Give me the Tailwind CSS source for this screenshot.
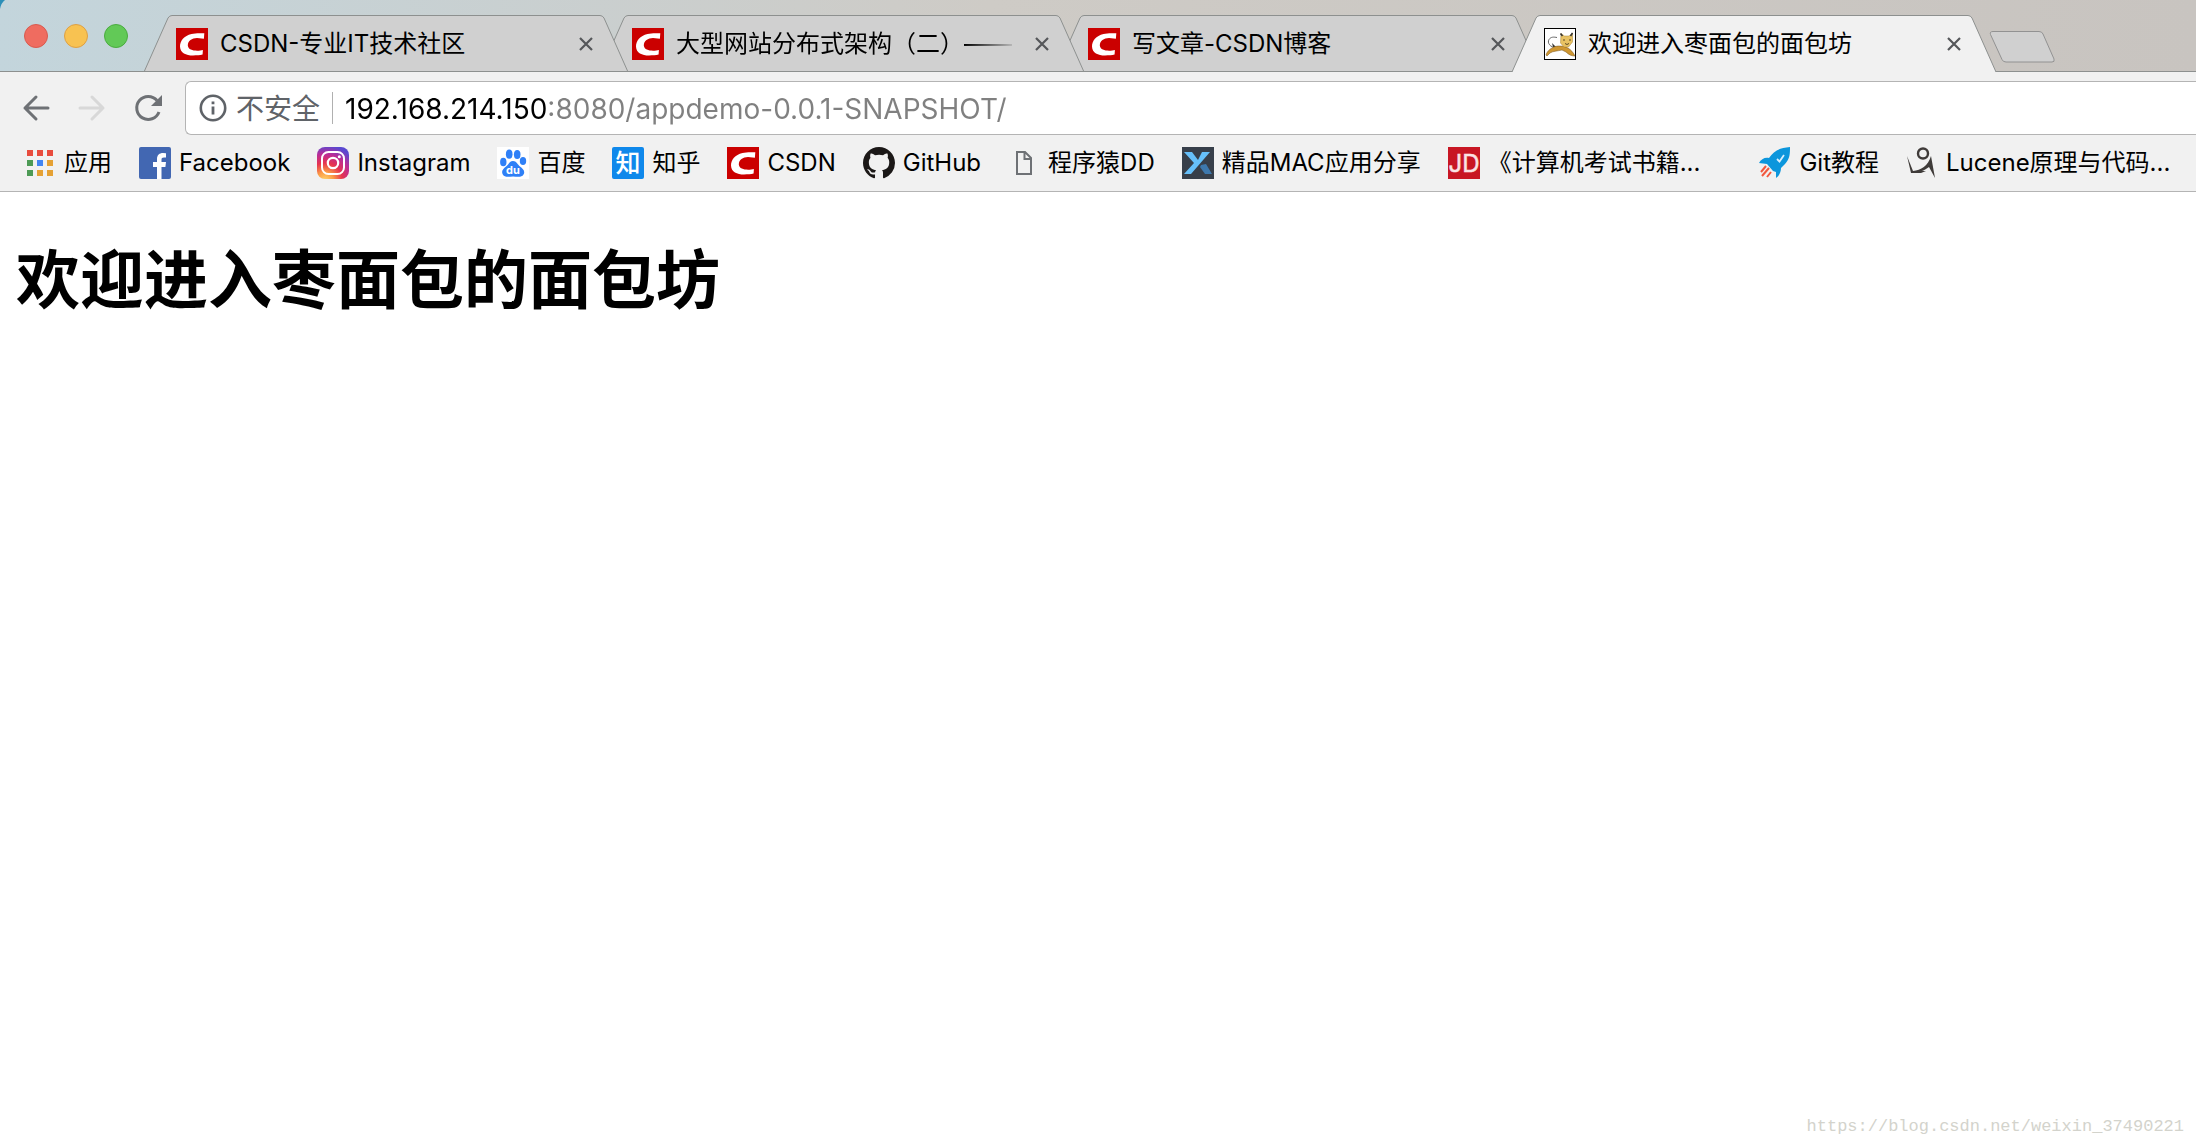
<!DOCTYPE html>
<html lang="zh-CN">
<head>
    <meta charset="UTF-8">
    <meta name="viewport" content="width=device-width, initial-scale=1.0">
    <title>欢迎进入枣面包的面包坊</title>
    <script src="https://cdn.jsdelivr.net/npm/@tailwindcss/browser@4"></script>
</head>
<body class="min-h-screen flex flex-col bg-white text-black font-[Inter,'Noto_Sans_CJK_SC',sans-serif] overflow-x-hidden">
    <!-- Shared shapes -->
    <svg class="hidden">
        <symbol id="csdn" viewBox="0 0 32 32">
            <rect width="32" height="32" fill="#cb0000"/>
            <path d="M28.300 5.300C24 5 19 5 15.500 6C8 7.800 4 13 4 18.500C4.200 25 10 27.500 17 27.500C21 27.500 24 27.300 26.600 26.600L26.900 22C22 23.200 12.300 23.400 11.800 17.500C11.800 12.500 16 10.200 21 10L27.900 10.700Z" fill="#fff"/>
        </symbol>
        <symbol id="tab-left" viewBox="0 0 30 57">
            <path d="M0 57L24 3Q25.500 .5 28 .5H30V57Z" fill="currentColor"/>
            <path d="M0 57L24 3Q25.500 .5 28 .5H30" fill="none" stroke="#8d908f"/>
        </symbol>
        <symbol id="tab-right" viewBox="0 0 30 57">
            <path d="M30 57L6 3Q4.500 .5 2 .5H0V57Z" fill="currentColor"/>
            <path d="M30 57L6 3Q4.500 .5 2 .5H0" fill="none" stroke="#8d908f"/>
        </symbol>
        <symbol id="close" viewBox="0 0 14 14">
            <path d="M1 1L13 13M13 1L1 13" stroke="#55575a" stroke-width="2.200" fill="none"/>
        </symbol>
    </svg>

    <!-- Tab strip -->
    <header class="relative flex h-[72px] bg-linear-to-r from-[#c3d5dc] via-[#cecbc6] via-45% to-[#c8c4c0]">
        <svg class="absolute left-0 top-0 size-3" viewBox="0 0 12 12"><path d="M0 0H5Q1 3 0 9Z" fill="#2c8fb8"/></svg>
        <div class="flex gap-4 pl-6 pr-4 pt-6 shrink-0">
            <button aria-label="关闭" class="size-6 rounded-full bg-[#ef6c60] border border-[#d85a4f]"></button>
            <button aria-label="最小化" class="size-6 rounded-full bg-[#f8c251] border border-[#dda045]"></button>
            <button aria-label="缩放" class="size-6 rounded-full bg-[#62c957] border border-[#4aac3f]"></button>
        </div>

        <nav class="flex grow min-w-0 pt-[15px] text-2xl" aria-label="标签页">
            <div class="relative z-30 flex basis-[484px] min-w-0 text-[#d0d0d0]">
                <svg class="w-[30px] h-[57px] shrink-0"><use href="#tab-left"/></svg>
                <div class="flex grow min-w-0 items-center bg-[#d0d0d0] border-t border-[#8d908f] pl-0.5 pr-[5px]">
                    <svg class="size-8 shrink-0"><use href="#csdn"/></svg>
                    <a href="#" class="ml-3 grow basis-0 overflow-hidden whitespace-nowrap text-black">CSDN-专业IT技术社区</a>
                    <button aria-label="关闭标签页" class="ml-4"><svg class="size-3.5"><use href="#close"/></svg></button>
                </div>
                <svg class="w-[30px] h-[57px] shrink-0"><use href="#tab-right"/></svg>
            </div>
            <div class="relative z-20 -ml-7 flex basis-[484px] min-w-0 text-[#d0d0d0]">
                <svg class="w-[30px] h-[57px] shrink-0"><use href="#tab-left"/></svg>
                <div class="flex grow min-w-0 items-center bg-[#d0d0d0] border-t border-[#8d908f] pl-0.5 pr-[5px]">
                    <svg class="size-8 shrink-0"><use href="#csdn"/></svg>
                    <a href="#" class="ml-3 grow basis-0 overflow-hidden whitespace-nowrap text-black [mask-image:linear-gradient(90deg,#000_84%,transparent)]">大型网站分布式架构（二）——</a>
                    <button aria-label="关闭标签页" class="ml-4"><svg class="size-3.5"><use href="#close"/></svg></button>
                </div>
                <svg class="w-[30px] h-[57px] shrink-0"><use href="#tab-right"/></svg>
            </div>
            <div class="relative z-10 -ml-7 flex basis-[484px] min-w-0 text-[#d0d0d0]">
                <svg class="w-[30px] h-[57px] shrink-0"><use href="#tab-left"/></svg>
                <div class="flex grow min-w-0 items-center bg-[#d0d0d0] border-t border-[#8d908f] pl-0.5 pr-[5px]">
                    <svg class="size-8 shrink-0"><use href="#csdn"/></svg>
                    <a href="#" class="ml-3 grow basis-0 overflow-hidden whitespace-nowrap text-black">写文章-CSDN博客</a>
                    <button aria-label="关闭标签页" class="ml-4"><svg class="size-3.5"><use href="#close"/></svg></button>
                </div>
                <svg class="w-[30px] h-[57px] shrink-0"><use href="#tab-right"/></svg>
            </div>
            <!-- Active tab -->
            <div class="relative z-40 -ml-7 flex basis-[484px] min-w-0 text-[#f1f1f1]">
                <svg class="w-[30px] h-[57px] shrink-0"><use href="#tab-left"/></svg>
                <div class="flex grow min-w-0 items-center bg-[#f1f1f1] border-t border-[#8d908f] pl-0.5 pr-[5px]">
                    <svg class="size-8 shrink-0" viewBox="0 0 32 32">
                        <rect x=".5" y=".5" width="31" height="31" fill="#fff" stroke="#000"/>
                        <path d="M12 20C6 19 3 15 5 11.500C7 8.500 10 9 13 9.500" fill="none" stroke="#666" stroke-width="1"/>
                        <path d="M8 15L12 19L9 19Z" fill="#333"/>
                        <path d="M2 27C3 23 7 20 11 18.500C15 17.500 20 18 24 20C27 22 29 24 31 28C28 28 25 27 22 24L18 22C14 23 9 23 6 25L3 28Z" fill="#cf9732" stroke="#75531c" stroke-width=".5"/>
                        <path d="M17 5.500L20.500 8H25L28.500 5L28.500 14L24.500 19H20L16.500 15Z" fill="#e8c263" stroke="#a8853a" stroke-width=".5"/>
                        <path d="M16.500 5.500L18.500 8M28.500 5L26.500 8" fill="none" stroke="#333" stroke-width="1.500"/>
                        <path d="M19 12H21M25 12H27M21 15.500L23 16.500L25 15.500" fill="none" stroke="#5e4a26" stroke-width="1"/>
                    </svg>
                    <a href="#" aria-current="page" class="ml-3 grow basis-0 overflow-hidden whitespace-nowrap text-black">欢迎进入枣面包的面包坊</a>
                    <button aria-label="关闭标签页" class="ml-4"><svg class="size-3.5"><use href="#close"/></svg></button>
                </div>
                <svg class="w-[30px] h-[57px] shrink-0"><use href="#tab-right"/></svg>
            </div>
            <button aria-label="打开新的标签页" class="relative -ml-2 mt-4 self-start shrink-0">
                <svg class="w-[68px] h-8" viewBox="0 0 68 32">
                    <path d="M5 .5H51Q54 .5 55 3L66 28Q67 31 64 31H18Q15 31 14 28.500L2.500 3.500Q1.500 .5 5 .5Z" fill="#d0d0d0" stroke="#929292"/>
                </svg>
            </button>
        </nav>
        <div class="absolute inset-x-0 bottom-0 z-35 h-px bg-[#8d908f]"></div>
    </header>

    <!-- Toolbar -->
    <div class="flex items-center bg-[#f1f1f1] pt-[9px]">
        <div class="flex gap-6 pl-5 pr-[21px]">
            <button aria-label="后退">
                <svg class="size-8" viewBox="0 0 32 32" fill="none" stroke="#6e7175" stroke-width="3" stroke-linecap="round" stroke-linejoin="round"><path d="M28 16H5M16 5L5 16L16 27"/></svg>
            </button>
            <button aria-label="前进" disabled>
                <svg class="size-8" viewBox="0 0 32 32" fill="none" stroke="#d8d8d8" stroke-width="3" stroke-linecap="round" stroke-linejoin="round"><path d="M4 16H27M16 5L27 16L16 27"/></svg>
            </button>
            <button aria-label="重新加载">
                <svg class="size-8" viewBox="0 0 32 32"><path d="M25 8.500A11.500 11.500 0 1 0 27 20" fill="none" stroke="#6e7175" stroke-width="3"/><path d="M30 3V14H19Z" fill="#6e7175"/></svg>
            </button>
        </div>
        <div class="flex grow items-center h-[54px] bg-white border border-r-0 border-[#b4b4b4] rounded-l-md pl-[11px] text-[28px]">
            <button class="flex items-center gap-[7px] text-[#5f6368]">
                <svg class="size-8" viewBox="0 0 32 32"><circle cx="16" cy="16" r="12.200" fill="none" stroke="#5f6368" stroke-width="2.600"/><path d="M14.600 14.500H17.400V22.500H14.600ZM14.600 9.500H17.400V12.300H14.600Z" fill="#5f6368"/></svg>
                <span class="pt-0.5">不安全</span>
            </button>
            <div class="mx-3 w-px h-8 bg-[#b0b0b0]"></div>
            <input type="text" aria-label="地址" value="192.168.214.150:8080/appdemo-0.0.1-SNAPSHOT/" class="grow pt-0.5 outline-none text-transparent bg-clip-text bg-[linear-gradient(90deg,#000_203px,#808080_203px)]">
        </div>
    </div>

    <!-- Bookmarks bar -->
    <nav class="flex items-center gap-[27px] h-[57px] shrink-0 bg-[#f1f1f1] border-b border-[#b4b4b4] pl-6 text-2xl whitespace-nowrap overflow-hidden" aria-label="书签栏">
        <a href="#" class="flex items-center gap-2 shrink-0">
            <svg class="size-8" viewBox="0 0 32 32">
                <path d="M3 3H9V9H3ZM13 3H19V9H13ZM23 3H29V9H23Z" fill="#e84c3d"/>
                <path d="M3 13H9V19H3ZM3 23H9V29H3Z" fill="#4d9a55"/>
                <path d="M13 13H19V19H13Z" fill="#4285f4"/>
                <path d="M23 13H29V19H23ZM13 23H19V29H13ZM23 23H29V29H23Z" fill="#e5a134"/>
            </svg>
            应用
        </a>
        <a href="#" class="flex items-center gap-2 shrink-0">
            <svg class="size-8" viewBox="0 0 32 32"><rect width="32" height="32" rx="2" fill="#4267b2"/><path d="M18 32V20H14V15H18V12C18 8 20.500 6 24 6L27 6.200V10.500H25C23 10.500 22.500 11.400 22.500 12.800V15H27L26.400 20H22.500V32Z" fill="#fff"/></svg>
            Facebook
        </a>
        <a href="#" class="flex items-center gap-2 shrink-0">
            <svg class="size-8" viewBox="0 0 32 32">
                <defs>
                    <radialGradient id="ig" cx=".25" cy="1.050" r="1.100"><stop offset="0" stop-color="#ffd76b"/><stop offset=".25" stop-color="#fb9a45"/><stop offset=".5" stop-color="#e6344f"/><stop offset=".75" stop-color="#bc2c95"/><stop offset="1" stop-color="#5a48d0"/></radialGradient>
                </defs>
                <rect width="32" height="32" rx="8" fill="url(#ig)"/>
                <rect x="5" y="5" width="22" height="22" rx="6.500" fill="none" stroke="#fff" stroke-width="2"/>
                <circle cx="16" cy="16" r="5.200" fill="none" stroke="#fff" stroke-width="2.200"/>
                <circle cx="22.300" cy="9.700" r="1.500" fill="#fff"/>
            </svg>
            Instagram
        </a>
        <a href="#" class="flex items-center gap-2 shrink-0">
            <svg class="size-8" viewBox="0 0 32 32">
                <rect width="32" height="32" fill="#fff"/>
                <g fill="#2f80f7">
                    <ellipse cx="6.300" cy="15" rx="3.200" ry="4.300"/><ellipse cx="12.200" cy="7.200" rx="3.300" ry="4.600"/><ellipse cx="20.200" cy="7.400" rx="3.300" ry="4.500"/><ellipse cx="26" cy="14" rx="3.200" ry="4"/>
                    <path d="M16 14C19.500 14 20.500 17.500 23 19.500C26 22 28.500 24 26.500 27.500C24.500 31 20 29.500 16 29.500C12 29.500 8 31 5.800 27.500C4 24 6 22 9 19.500C11.500 17.500 12.500 14 16 14Z"/>
                </g>
                <text x="16" y="27" text-anchor="middle" font-size="11" font-weight="700" fill="#fff">du</text>
            </svg>
            百度
        </a>
        <a href="#" class="flex items-center gap-2 shrink-0">
            <svg class="size-8" viewBox="0 0 32 32"><rect width="32" height="32" rx="2" fill="#0f88eb"/><text x="16" y="25" text-anchor="middle" font-size="25" font-weight="500" fill="#fff">知</text></svg>
            知乎
        </a>
        <a href="#" class="flex items-center gap-2 shrink-0">
            <svg class="size-8"><use href="#csdn"/></svg>
            CSDN
        </a>
        <a href="#" class="flex items-center gap-2 shrink-0">
            <svg class="size-8" viewBox="0 0 16 16"><path d="M8 0C3.580 0 0 3.580 0 8c0 3.540 2.290 6.530 5.470 7.590.4.070.55-.17.55-.38 0-.19-.01-.82-.01-1.490-2.010.37-2.530-.49-2.690-.94-.09-.23-.48-.94-.82-1.130-.28-.15-.68-.52-.01-.53.63-.01 1.080.58 1.230.82.72 1.210 1.870.87 2.330.66.07-.52.28-.87.51-1.070-1.780-.2-3.640-.89-3.640-3.950 0-.87.31-1.590.82-2.150-.08-.2-.36-1.020.08-2.120 0 0 .67-.21 2.200.82.64-.18 1.320-.27 2-.27s1.360.09 2 .27c1.530-1.040 2.200-.82 2.200-.82.44 1.100.16 1.920.08 2.120.51.56.82 1.270.82 2.150 0 3.070-1.870 3.750-3.650 3.950.29.25.54.73.54 1.480 0 1.070-.01 1.930-.01 2.200 0 .21.15.46.55.38A8.010 8.010 0 0 0 16 8c0-4.420-3.580-8-8-8Z" fill="#1b1817"/></svg>
            GitHub
        </a>
        <a href="#" class="flex items-center gap-2 shrink-0">
            <svg class="size-8" viewBox="0 0 32 32" fill="none" stroke="#6e7175" stroke-width="2"><path d="M9 5H17L23 11V27H9ZM16.500 5V12H23"/></svg>
            程序猿DD
        </a>
        <a href="#" class="flex items-center gap-2 shrink-0">
            <svg class="size-8" viewBox="0 0 32 32"><rect width="32" height="32" fill="#373f4a"/><path d="M19 18L24 17L30 27H23L18 20Z" fill="#3d78ad"/><path d="M2 5H10L16 13L20 5H28L9 27H2L12 16Z" fill="#66c0fa"/></svg>
            精品MAC应用分享
        </a>
        <a href="#" class="flex items-center gap-2 shrink-0">
            <svg class="size-8" viewBox="0 0 32 32"><rect width="32" height="32" fill="#c81623"/><text x="16" y="25" text-anchor="middle" font-size="24" fill="#fbe3e4" stroke="#fbe3e4" stroke-width=".5">JD</text></svg>
            《计算机考试书籍...
        </a>
        <a href="#" class="flex items-center gap-2 shrink-0 ml-8">
            <svg class="size-8" viewBox="0 0 32 32">
                <path d="M31 0C31 6 31 12 26 17L22 21C22 25 20 29 17 31V25L14 24L8 17L0 16C2 12 6 10 10 11C15 4 20 1 31 0Z" fill="#0c96dc"/>
                <path d="M18 12L20.500 14.500L25 8" fill="none" stroke="#d8efff" stroke-width="1.800"/>
                <path d="M7 19L2 25M10 21L3 29M12 25L8 30" fill="none" stroke="#f2583e" stroke-width="2"/>
            </svg>
            Git教程
        </a>
        <a href="#" class="flex items-center gap-2 shrink-0">
            <svg class="size-8" viewBox="0 0 32 32">
                <circle cx="17" cy="6.500" r="5" fill="none" stroke="#3f3b39" stroke-width="2.400"/>
                <path d="M1 9L7 24H20L15 26H5ZM7 24C15 23 22 19 25 9L29 31L23 20C18 24 13 25 7 26Z" fill="#3f3b39"/>
            </svg>
            Lucene原理与代码...
        </a>
    </nav>

    <main class="grow px-4 pt-[45px]">
        <h1 class="text-[64px] leading-[86px] font-bold">欢迎进入枣面包的面包坊</h1>
    </main>
    <footer class="px-3 pb-[7px] text-right font-['Liberation_Mono',monospace] text-[17px] leading-6 text-[#d3d3cc]">https://blog.csdn.net/weixin_37490221</footer>
</body>
</html>
